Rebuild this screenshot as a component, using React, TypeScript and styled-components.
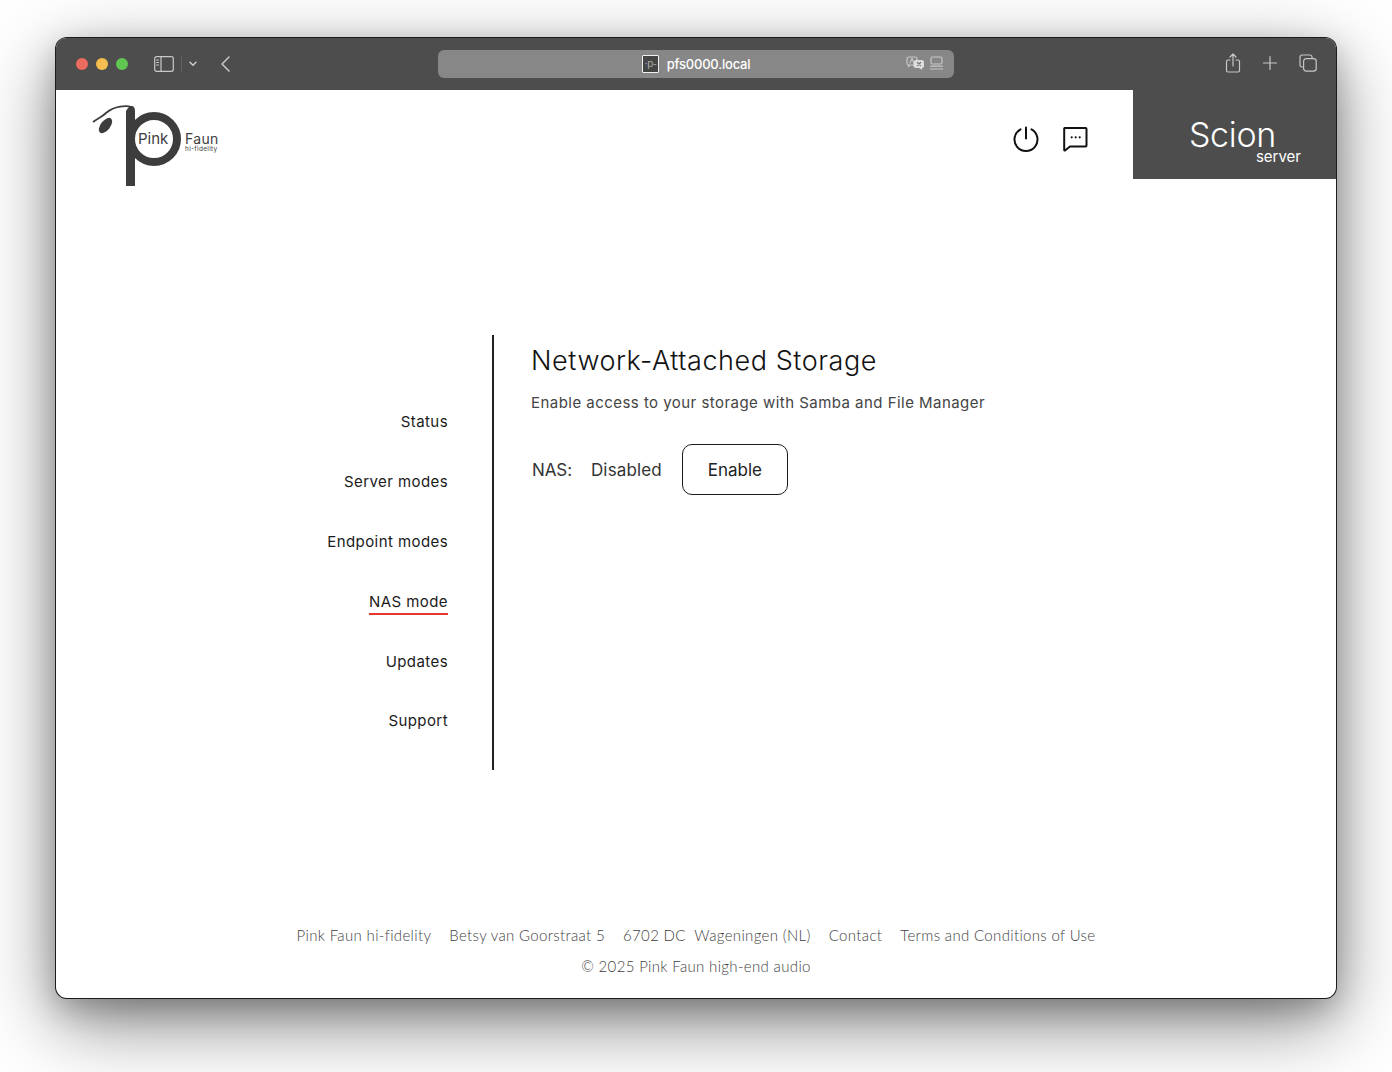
import React from 'react';
import styled, { createGlobalStyle } from 'styled-components';

const GlobalStyle = createGlobalStyle`
  html, body {
    margin: 0;
    padding: 0;
    background: #fff;
  }
  body {
    font-family: "Inter", "Liberation Sans", sans-serif;
  }
`;

const Page = styled.div`
  width: 1392px;
  height: 1072px;
  padding: 38px 56px 0;
  box-sizing: border-box;
  overflow: hidden;
`;

const Window = styled.div`
  width: 1280px;
  height: 960px;
  display: flex;
  flex-direction: column;
  background: #fff;
  border-radius: 11px;
  overflow: hidden;
  box-shadow: 0 0 0 1px #1c1c1c, 0 24px 76px rgba(0, 0, 0, 0.5), 0 10px 30px rgba(0, 0, 0, 0.22);
`;

const TitleBar = styled.div`
  height: 52px;
  flex: none;
  display: grid;
  grid-template-columns: 382px 516px 1fr;
  align-items: center;
  background: #4d4d4d;
`;

const LeftTools = styled.div`
  display: flex;
  align-items: center;
  padding-left: 20px;
`;

const Light = styled.span<{ $color: string }>`
  width: 12px;
  height: 12px;
  border-radius: 50%;
  margin-right: 8px;
  background: ${(p) => p.$color};
`;

const ToolIcon = styled.svg<{ $gap?: number; $weight?: number }>`
  display: block;
  flex: none;
  margin-left: ${(p) => p.$gap ?? 0}px;
  fill: none;
  stroke: #c8c8c8;
  stroke-width: ${(p) => p.$weight ?? 1.2};
  stroke-linecap: round;
  stroke-linejoin: round;
`;

const Divider = styled.span`
  width: 1px;
  height: 18px;
  margin-left: 7px;
  background: #5f5f5f;
`;

const AddressBar = styled.div`
  height: 28px;
  border-radius: 6px;
  background: #878787;
  position: relative;
  display: flex;
  align-items: center;
  justify-content: center;
  gap: 8px;
`;

const Favicon = styled.span`
  width: 17px;
  height: 18px;
  box-sizing: border-box;
  border: 1px solid #f0f0f0;
  border-radius: 1px;
  background: #454545;
  color: #a8a8a8;
  font: 11px/15px "Liberation Sans", sans-serif;
  letter-spacing: -0.5px;
  text-align: center;
  white-space: nowrap;
`;

const Url = styled.span`
  font: 500 13px "Inter", sans-serif;
  color: #fff;
  letter-spacing: -0.2px;
`;

const BarIcons = styled.div`
  position: absolute;
  right: 11px;
  top: 6px;
  display: flex;
  gap: 6px;
`;

const RightTools = styled.div`
  display: flex;
  align-items: center;
  justify-content: flex-end;
  gap: 21px;
  padding-right: 19px;
  margin-top: -2px;
`;

const Header = styled.header`
  height: 89px;
  flex: none;
  display: flex;
  justify-content: space-between;
`;

const LogoBox = styled.div`
  position: relative;
  width: 130px;
  height: 84px;
  margin: 14px 0 0 36px;
`;

const LogoMark = styled.svg`
  display: block;
`;

const LogoPink = styled.span`
  position: absolute;
  left: 46px;
  top: 27px;
  font: 400 15px/16px "Inter", sans-serif;
  color: #3d3d3d;
`;

const LogoFaun = styled.span`
  position: absolute;
  left: 93px;
  top: 28px;
  font: 400 14px/14px "Inter", sans-serif;
  letter-spacing: 0.3px;
  color: #3d3d3d;
`;

const LogoSub = styled.span`
  position: absolute;
  left: 93px;
  top: 42px;
  font: 400 6.5px/7px "Inter", sans-serif;
  letter-spacing: 0.3px;
  color: #3d3d3d;
`;

const HeaderRight = styled.div`
  display: flex;
`;

const HeaderIcons = styled.div`
  display: flex;
  align-items: flex-start;
  gap: 23px;
  padding: 36px 45px 0 0;
`;

const Product = styled.div`
  width: 203px;
  background: #4d4d4d;
  color: #fff;
  box-sizing: border-box;
  padding: 30px 35px 0 0;
  text-align: right;
`;

const ProductName = styled.div`
  font: 300 34px/29px "Inter", sans-serif;
  padding-right: 25px;
  letter-spacing: -0.3px;
`;

const ProductKind = styled.div`
  font: 400 15px/16px "Inter", sans-serif;
`;

const Main = styled.main`
  display: flex;
  height: 435px;
  margin-top: 156px;
  flex: none;
`;

const Sidebar = styled.nav`
  width: 438px;
  box-sizing: border-box;
  border-right: 2px solid #222;
  padding: 73px 44px 0 0;
  display: flex;
  flex-direction: column;
  align-items: flex-end;
`;

const NavItem = styled.a<{ $active?: boolean }>`
  height: 59.88px;
  flex: none;
  font: 400 15px/28px "Inter", sans-serif;
  letter-spacing: 0.42px;
  color: #1b1b1b;
  > span {
    display: block;
    height: 25px;
    border-bottom: 2px solid ${(p) => (p.$active ? '#e8362a' : 'transparent')};
  }
`;

const Content = styled.section`
  padding: 9px 0 0 37px;
`;

const Title = styled.h1`
  margin: 0;
  font: 300 27px/34px "Inter", sans-serif;
  letter-spacing: 0.55px;
  color: #111;
`;

const Lead = styled.p`
  margin: 15px 0 0;
  font: 400 15px/20px "Inter", sans-serif;
  letter-spacing: 0.46px;
  color: #444;
`;

const StatusRow = styled.div`
  display: flex;
  align-items: center;
  margin-top: 31px;
  font: 400 17px "Inter", sans-serif;
  color: #333;
`;

const StatusLabel = styled.span`
  margin-right: 19px;
  margin-left: 1px;
  letter-spacing: -0.1px;
`;

const StatusValue = styled.span`
  margin-right: 20px;
  letter-spacing: 0.15px;
`;

const EnableButton = styled.button`
  width: 106px;
  height: 51px;
  background: #fff;
  border: 1px solid #1b1b1b;
  border-radius: 10px;
  font: 400 17px "Inter", sans-serif;
  color: #222;
`;

const Footer = styled.footer`
  margin-top: auto;
  padding-bottom: 22px;
  color: #3f3f3f;
  font: 300 15px/20px "Lato", sans-serif;
  letter-spacing: 0.34px;
  text-align: center;
`;

const FooterRow = styled.div`
  display: flex;
  justify-content: center;
  gap: 18px;
  margin-bottom: 11px;
`;

export default function App() {
  return (
    <Page>
      <GlobalStyle />
      <Window>
        <TitleBar>
          <LeftTools>
            <Light $color="#ec6a5e" />
            <Light $color="#f4bf4f" />
            <Light $color="#61c554" />
            <ToolIcon width="20" height="16" viewBox="0 0 20 16" $gap={18}>
              <rect x="0.7" y="0.7" width="18.6" height="14.6" rx="2" />
              <path d="M7 1v14M2.6 4h2M2.6 6.5h2M2.6 9h2" />
            </ToolIcon>
            <Divider />
            <ToolIcon width="8" height="6" viewBox="0 0 8 6" $gap={7} $weight={1.5}>
              <path d="M1 1.2l3 3 3-3" />
            </ToolIcon>
            <ToolIcon width="9" height="16" viewBox="0 0 9 16" $gap={24} $weight={1.5}>
              <path d="M8 1L1 8l7 7" />
            </ToolIcon>
          </LeftTools>
          <AddressBar>
            <Favicon>·p-</Favicon>
            <Url>pfs0000.local</Url>
            <BarIcons>
              <ToolIcon width="18" height="14" viewBox="0 0 18 14">
                <path d="M3 1h6a2 2 0 0 1 2 2v4a2 2 0 0 1-2 2H4l-1.500 1.500V9A2 2 0 0 1 1 7V3a2 2 0 0 1 2-2z" />
                <path d="M4 7l2-4.500L8 7" />
                <path d="M10 4.500h5.500a2 2 0 0 1 2 2v3a2 2 0 0 1-2 2V13l-2-1.500H10a2 2 0 0 1-2-2v-3a2 2 0 0 1 2-2z" fill="#dcdcdc" stroke="#dcdcdc" />
                <path d="M11.500 6.500l3 3M14.500 6.500l-3 3" stroke="#777" />
              </ToolIcon>
              <ToolIcon width="13" height="14" viewBox="0 0 13 14">
                <rect x="1" y="1" width="11" height="7" rx="1.5" />
                <path d="M0.5 10.2h12M0.5 13h12" />
              </ToolIcon>
            </BarIcons>
          </AddressBar>
          <RightTools>
            <ToolIcon width="16" height="20" viewBox="0 0 16 20">
              <path d="M5 7H3a1.500 1.500 0 0 0-1.500 1.500v9A1.500 1.500 0 0 0 3 19h10a1.500 1.500 0 0 0 1.500-1.500v-9A1.500 1.500 0 0 0 13 7h-2M8 13V1.200M5 4l3-3 3 3" />
            </ToolIcon>
            <ToolIcon width="16" height="16" viewBox="0 0 16 16">
              <path d="M8 1.500v13M1.500 8h13" />
            </ToolIcon>
            <ToolIcon width="18" height="18" viewBox="0 0 18 18">
              <path d="M3.500 13H3a2 2 0 0 1-2-2V3a2 2 0 0 1 2-2h8a2 2 0 0 1 2 2v.5" />
              <rect x="4.600" y="4.600" width="12.600" height="12.600" rx="2.600" />
            </ToolIcon>
          </RightTools>
        </TitleBar>
        <Header>
          <LogoBox>
            <LogoMark width="130" height="84" viewBox="0 0 130 84">
              <path d="M34 82V7C36 4 37 2 39 2C42 2 43 4 43 7V82z" fill="#3d3d3d" />
              <circle cx="62" cy="35" r="23" stroke="#3d3d3d" strokeWidth="8" fill="none" />
              <path d="M1 18C6 14 10 13 14 9C19 5 23 3.500 28 2.700C32 2 36 2 40 3" stroke="#3d3d3d" strokeWidth="1.800" fill="none" />
              <ellipse cx="13.500" cy="21.500" rx="4.800" ry="9" transform="rotate(38 13.500 21.500)" fill="#3d3d3d" />
            </LogoMark>
            <LogoPink>Pink</LogoPink>
            <LogoFaun>Faun</LogoFaun>
            <LogoSub>hi-fidelity</LogoSub>
          </LogoBox>
          <HeaderRight>
            <HeaderIcons>
              <svg width="26" height="26" viewBox="0 0 26 26" fill="none" stroke="#111" strokeWidth="2" strokeLinecap="round">
                <path d="M7.500 3.400a11.500 11.500 0 1 0 11 0M13 1.500v11" />
              </svg>
              <svg width="26" height="26" viewBox="0 0 26 26" fill="none" stroke="#111" strokeWidth="2" strokeLinejoin="round">
                <path d="M2.500 2h21a1 1 0 0 1 1 1v16.500a1 1 0 0 1-1 1H8l-5 4a.5.5 0 0 1-.8-.4V3a1 1 0 0 1 .3-1z" />
                <circle cx="9.700" cy="11.300" r="1.100" fill="#111" stroke="none" />
                <circle cx="13.700" cy="11.300" r="1.100" fill="#111" stroke="none" />
                <circle cx="17.700" cy="11.300" r="1.100" fill="#111" stroke="none" />
              </svg>
            </HeaderIcons>
            <Product>
              <ProductName>Scion</ProductName>
              <ProductKind>server</ProductKind>
            </Product>
          </HeaderRight>
        </Header>
        <Main>
          <Sidebar>
            <NavItem><span>Status</span></NavItem>
            <NavItem><span>Server modes</span></NavItem>
            <NavItem><span>Endpoint modes</span></NavItem>
            <NavItem $active><span>NAS mode</span></NavItem>
            <NavItem><span>Updates</span></NavItem>
            <NavItem><span>Support</span></NavItem>
          </Sidebar>
          <Content>
            <Title>Network-Attached Storage</Title>
            <Lead>Enable access to your storage with Samba and File Manager</Lead>
            <StatusRow>
              <StatusLabel>NAS:</StatusLabel>
              <StatusValue>Disabled</StatusValue>
              <EnableButton>Enable</EnableButton>
            </StatusRow>
          </Content>
        </Main>
        <Footer>
          <FooterRow>
            <span>Pink Faun hi-fidelity</span>
            <span>Betsy van Goorstraat 5</span>
            <span>6702 DC&nbsp; Wageningen (NL)</span>
            <span>Contact</span>
            <span>Terms and Conditions of Use</span>
          </FooterRow>
          <div>© 2025 Pink Faun high-end audio</div>
        </Footer>
      </Window>
    </Page>
  );
}
